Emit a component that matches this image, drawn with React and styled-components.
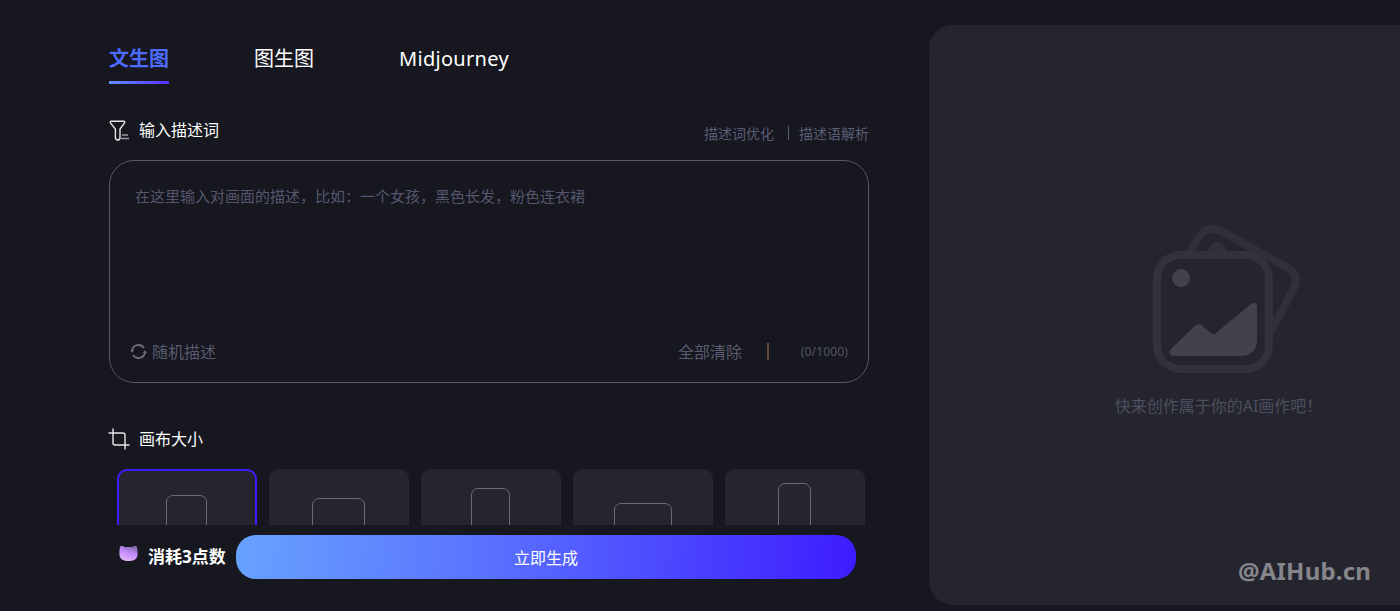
import React from "react";
import styled, { createGlobalStyle } from "styled-components";
import { Crop } from "lucide-react";

const Global = createGlobalStyle`
  html, body {
    margin: 0;
    height: 100%;
    overflow: hidden;
    background: #16171f;
    font-family: "Noto Sans", "Noto Sans CJK SC", sans-serif;
  }
  * { box-sizing: border-box; }
`;

const Page = styled.div`
  display: flex;
  height: 611px;
  width: 1400px;
  overflow: hidden;
  background: #16171f;
`;
const Left = styled.main`
  position: relative;
  width: 929px;
  flex: none;
  height: 611px;
  padding: 44px 60px 0 109px;
  overflow: hidden;
`;
const Tabs = styled.nav`
  display: flex;
  gap: 85px;
`;
const Tab = styled.div`
  height: 40px;
  font-size: 20px;
  line-height: 29px;
  font-weight: ${(p) => (p.$active ? 700 : 400)};
  letter-spacing: ${(p) => (p.$latin ? "0.3px" : "0")};
  color: ${(p) => (p.$active ? "#4d6cff" : "#fff")};
  border-bottom: 3px solid transparent;
  border-image: ${(p) =>
    p.$active ? "linear-gradient(90deg, #5f8fff, #5a2fff) 1" : "none"};
`;
const SectionHead = styled.div`
  display: flex;
  align-items: center;
  justify-content: space-between;
  margin-top: ${(p) => p.$top}px;
  height: 24px;
`;
const SectionTitle = styled.div`
  display: flex;
  align-items: center;
  gap: 9px;
  font-size: 16px;
  line-height: 24px;
  color: #fff;
`;
const HeadLinks = styled.div`
  display: flex;
  align-items: center;
  font-size: 14px;
  color: #5a5c75;
  margin-top: 6px;
`;
const LinkDivider = styled.span`
  width: 1px;
  height: 14px;
  margin: 0 10px 0 14px;
  background: #5a5c75;
`;
const PromptBox = styled.div`
  display: flex;
  flex-direction: column;
  justify-content: space-between;
  height: 223px;
  margin-top: 18px;
  padding: 25px 20px 19px 25px;
  border: 1px solid #5a5768;
  border-radius: 25px;
`;
const Placeholder = styled.div`
  font-size: 15px;
  line-height: 20px;
  color: #55566e;
`;
const PromptFoot = styled.div`
  display: flex;
  align-items: center;
  justify-content: space-between;
  margin-left: -5px;
  height: 24px;
`;
const FootAction = styled.div`
  display: flex;
  align-items: center;
  gap: 5px;
  font-size: 16px;
  color: #5a5b70;
`;
const FootRight = styled.div`
  display: flex;
  align-items: center;
  font-size: 16px;
  color: #5a5b70;
`;
const FootDivider = styled.span`
  width: 2px;
  height: 17px;
  margin: 0 31px 0 25px;
  background: #5e4b3f;
`;
const Counter = styled.span`
  width: 48px;
  font-size: 12px;
  letter-spacing: 0.15px;
  text-align: right;
  color: #55566a;
`;
const CropIcon = styled(Crop)`
  margin: -2px -1px -2px -2px;
`;
const Sizes = styled.div`
  display: flex;
  gap: 12px;
  margin: 18px 0 0 8px;
`;
const SizeCard = styled.div`
  display: flex;
  align-items: flex-start;
  justify-content: center;
  flex: none;
  width: 140px;
  height: 140px;
  border-radius: 10px;
  background: #24252e;
  border: ${(p) => (p.$selected ? "2px solid #3d1cff" : "none")};
  padding-top: ${(p) => p.$top - (p.$selected ? 2 : 0)}px;
`;
const SizeFrame = styled.div`
  width: ${(p) => p.$w}px;
  height: 70px;
  flex: none;
  margin-left: ${(p) => (p.$w % 2 ? -1 : 0)}px;
  border: 1px solid #6a6a78;
  border-radius: 7px;
`;
const BottomBar = styled.div`
  position: absolute;
  left: 0;
  right: 0;
  bottom: 0;
  height: 86px;
  display: flex;
  align-items: flex-start;
  padding: 10px 0 0 119px;
  background: #16171f;
`;
const Cost = styled.div`
  display: flex;
  align-items: center;
  gap: 10px;
  width: 117px;
  height: 40px;
  flex: none;
  font-size: 17px;
  font-weight: 700;
  color: #fff;
  white-space: nowrap;
`;
const CatGlyph = styled.svg`
  flex: none;
  margin-top: -4px;
`;
const GenerateButton = styled.button`
  width: 620px;
  height: 44px;
  flex: none;
  border: 0;
  border-radius: 20px;
  background: linear-gradient(95deg, #68a3ff 0%, #5a72ff 40%, #3d1cff 100%);
  color: #fff;
  font: inherit;
  font-size: 16px;
`;
const Right = styled.aside`
  position: relative;
  flex: none;
  width: 570px;
  height: 580px;
  margin-top: 25px;
  display: flex;
  flex-direction: column;
  align-items: center;
  padding-top: 198px;
  border-radius: 24px;
  background: #24252e;
`;
const EmptyPicture = styled.svg`
  flex: none;
  margin-left: 24px;
`;
const EmptyText = styled.div`
  margin: 21px 0 0 9px;
  font-size: 16px;
  line-height: 24px;
  color: #4d4e5e;
`;
const Watermark = styled.div`
  position: absolute;
  left: 309px;
  top: 530px;
  font-size: 24px;
  font-weight: 700;
  line-height: 32px;
  letter-spacing: 0.2px;
  color: #85858b;
  white-space: nowrap;
`;

const FilterIcon = () => (
  <svg width="21" height="21" viewBox="0 0 21 21" fill="none">
    <path
      d="M2.2 1.200h12.600c.9 0 1.300 1 .8 1.700L11 9v8.500c0 1.600-1.200 2.500-2.400 2.500S6.400 19 6.400 17.600V9L1.400 2.900c-.5-.7 0-1.700.8-1.700z"
      stroke="#e8e8ea"
      strokeWidth="1.400"
    />
    <path d="M13 15h6M12 18.500h8" stroke="#9a9aa2" strokeWidth="1.600" />
  </svg>
);

const RefreshIcon = () => (
  <svg width="17" height="17" viewBox="0 0 17 17" fill="none">
    <path d="M2 7.500A6.600 6.600 0 0 1 14 5" stroke="#6d6d78" strokeWidth="1.800" />
    <path d="M15 9.500A6.600 6.600 0 0 1 3 12" stroke="#6d6d78" strokeWidth="1.800" />
    <path d="M0 7l4.200 0-2.100 2.800zM17 10l-4.200 0 2.100-2.800z" fill="#6d6d78" />
  </svg>
);

const CatIcon = () => (
  <CatGlyph width="19" height="16" viewBox="0 0 20 17">
    <defs>
      <linearGradient id="cat" x1="0.7" y1="0" x2="0.3" y2="1">
        <stop offset="0" stopColor="#7f6aa8" />
        <stop offset="0.45" stopColor="#c58bff" />
        <stop offset="1" stopColor="#e3b6f0" />
      </linearGradient>
    </defs>
    <path
      d="M1 1.500C3 .6 5 1 6.500 2.500c2.200-.6 4.600-.6 7 0C15 1 17 .6 19 1.500c.6 3 .9 6 .6 9-.4 4.500-4.400 6.500-9.600 6.500S.8 15 .4 10.500C.1 7.500.4 4.500 1 1.500z"
      fill="url(#cat)"
    />
  </CatGlyph>
);

const PictureIcon = () => (
  <EmptyPicture width="150" height="150" viewBox="0 0 150 150" fill="none">
    <path
      d="M38 31L48 14C53 6 62 3 72 9L137 45C145 50 147 58 142 67L120 108"
      stroke="#2f303a"
      strokeWidth="8"
    />
    <path d="M57 28a9 9 0 0 1 18 0z" fill="#2f303a" />
    <rect x="6" y="32" width="112" height="114" rx="24" stroke="#31323c" strokeWidth="8" />
    <circle cx="30" cy="55" r="9" fill="#42424f" />
    <path
      d="M20 126L44 103c2-2 4-2 6-1l10 8c2 2 3 2 5 0L100 81c3-2 6-1 6 3V117c0 10-6 16-16 16H23c-4 0-6-3-3-7z"
      fill="#42424f"
    />
  </EmptyPicture>
);

const sizes = [
  { w: 41, top: 26 },
  { w: 53, top: 29 },
  { w: 39, top: 19 },
  { w: 58, top: 34 },
  { w: 33, top: 14 },
];

const App = () => {
  return (
    <Page>
      <Global />
      <Left>
        <Tabs>
          <Tab $active>文生图</Tab>
          <Tab>图生图</Tab>
          <Tab $latin>Midjourney</Tab>
        </Tabs>
        <SectionHead $top={34}>
          <SectionTitle>
            <FilterIcon />
            输入描述词
          </SectionTitle>
          <HeadLinks>
            描述词优化
            <LinkDivider />
            描述语解析
          </HeadLinks>
        </SectionHead>
        <PromptBox>
          <Placeholder>在这里输入对画面的描述，比如：一个女孩，黑色长发，粉色连衣裙</Placeholder>
          <PromptFoot>
            <FootAction>
              <RefreshIcon />
              随机描述
            </FootAction>
            <FootRight>
              全部清除
              <FootDivider />
              <Counter>(0/1000)</Counter>
            </FootRight>
          </PromptFoot>
        </PromptBox>
        <SectionHead $top={44}>
          <SectionTitle>
            <CropIcon size={24} color="#e8e8ea" strokeWidth={1.4} />
            画布大小
          </SectionTitle>
        </SectionHead>
        <Sizes>
          {sizes.map((s, i) => (
            <SizeCard key={i} $selected={i === 0} $top={s.top}>
              <SizeFrame $w={s.w} />
            </SizeCard>
          ))}
        </Sizes>
        <BottomBar>
          <Cost>
            <CatIcon />
            消耗3点数
          </Cost>
          <GenerateButton>立即生成</GenerateButton>
        </BottomBar>
      </Left>
      <Right>
        <PictureIcon />
        <EmptyText>快来创作属于你的AI画作吧！</EmptyText>
        <Watermark>@AIHub.cn</Watermark>
      </Right>
    </Page>
  );
};

export default App;
